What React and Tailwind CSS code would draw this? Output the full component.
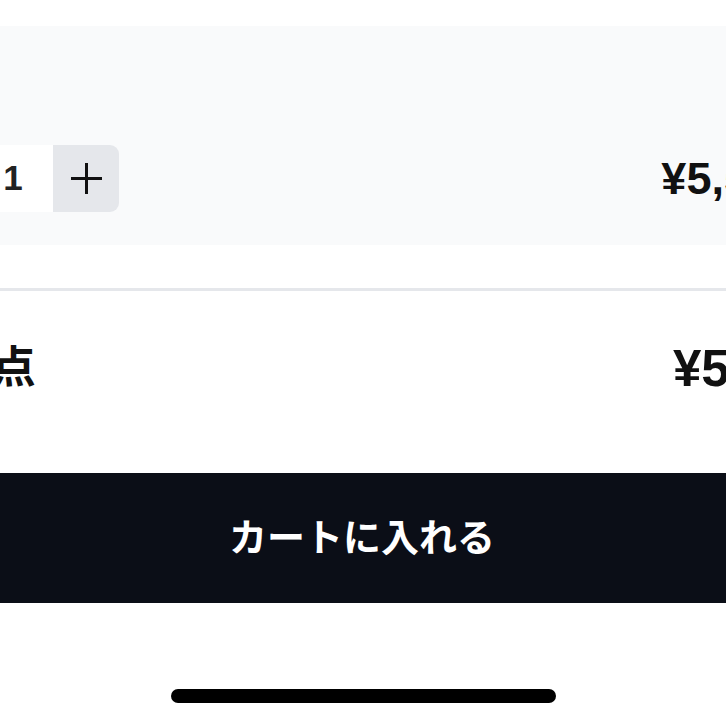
import React, { useState } from 'react';

const font = { fontFamily: '"Liberation Sans", "Noto Sans CJK JP", sans-serif' };

function Stepper({ qty, setQty }) {
  return (
    <div className="flex h-[67px]">
      <button
        onClick={() => setQty(Math.max(1, qty - 1))}
        className="w-[66px] h-full flex items-center justify-center bg-[#e5e7eb] rounded-l-[9px]"
        aria-label="decrease"
      >
        <svg width="33" height="33" viewBox="0 0 33 33">
          <path d="M1 16.5h31" stroke="#111" strokeWidth="3" />
        </svg>
      </button>
      <div className="w-[80px] h-full bg-white flex items-center justify-center text-[35px] font-semibold text-[#222]">
        {qty}
      </div>
      <button
        onClick={() => setQty(qty + 1)}
        className="w-[66px] h-full flex items-center justify-center bg-[#e5e7eb] rounded-r-[9px]"
        aria-label="increase"
      >
        <svg width="33" height="33" viewBox="0 0 33 33">
          <path d="M1 16.5h31M16.5 1v31" stroke="#111" strokeWidth="3" />
        </svg>
      </button>
    </div>
  );
}

export default function App() {
  const [qty, setQty] = useState(1);
  const price = 5500;
  const fmt = (n) => '¥' + n.toLocaleString('ja-JP');

  return (
    <div className="w-[726px] h-[726px] overflow-hidden bg-white" style={font}>
      <div className="w-[1078px] ml-[-177px] px-[44px] pt-[26px]">
        {/* item panel */}
        <div className="bg-[#f9fafb] pt-[119px] pb-[33px] pl-[40px] pr-[58px] flex items-center justify-between">
          <Stepper qty={qty} setQty={setQty} />
          <span className="text-[45px] font-bold text-[#111] leading-none">{fmt(price * qty)}</span>
        </div>

        {/* total */}
        <div className="mt-[43px] border-t-[3px] border-[#e5e7eb] h-[157px] flex items-center justify-between pr-[28px]">
          <span className="text-[44px] font-bold text-[#111] leading-none">合計 {qty}点</span>
          <span className="text-[51px] font-bold text-[#111] leading-none">{fmt(price * qty)}</span>
        </div>

        <button className="mt-[28px] w-full h-[130px] bg-[#0b0e17] text-white text-[38px] font-bold flex items-center justify-center">
          カートに入れる
        </button>
      </div>

      <div className="mx-auto mt-[86px] w-[385px] h-[14px] rounded-full bg-black" />
    </div>
  );
}
